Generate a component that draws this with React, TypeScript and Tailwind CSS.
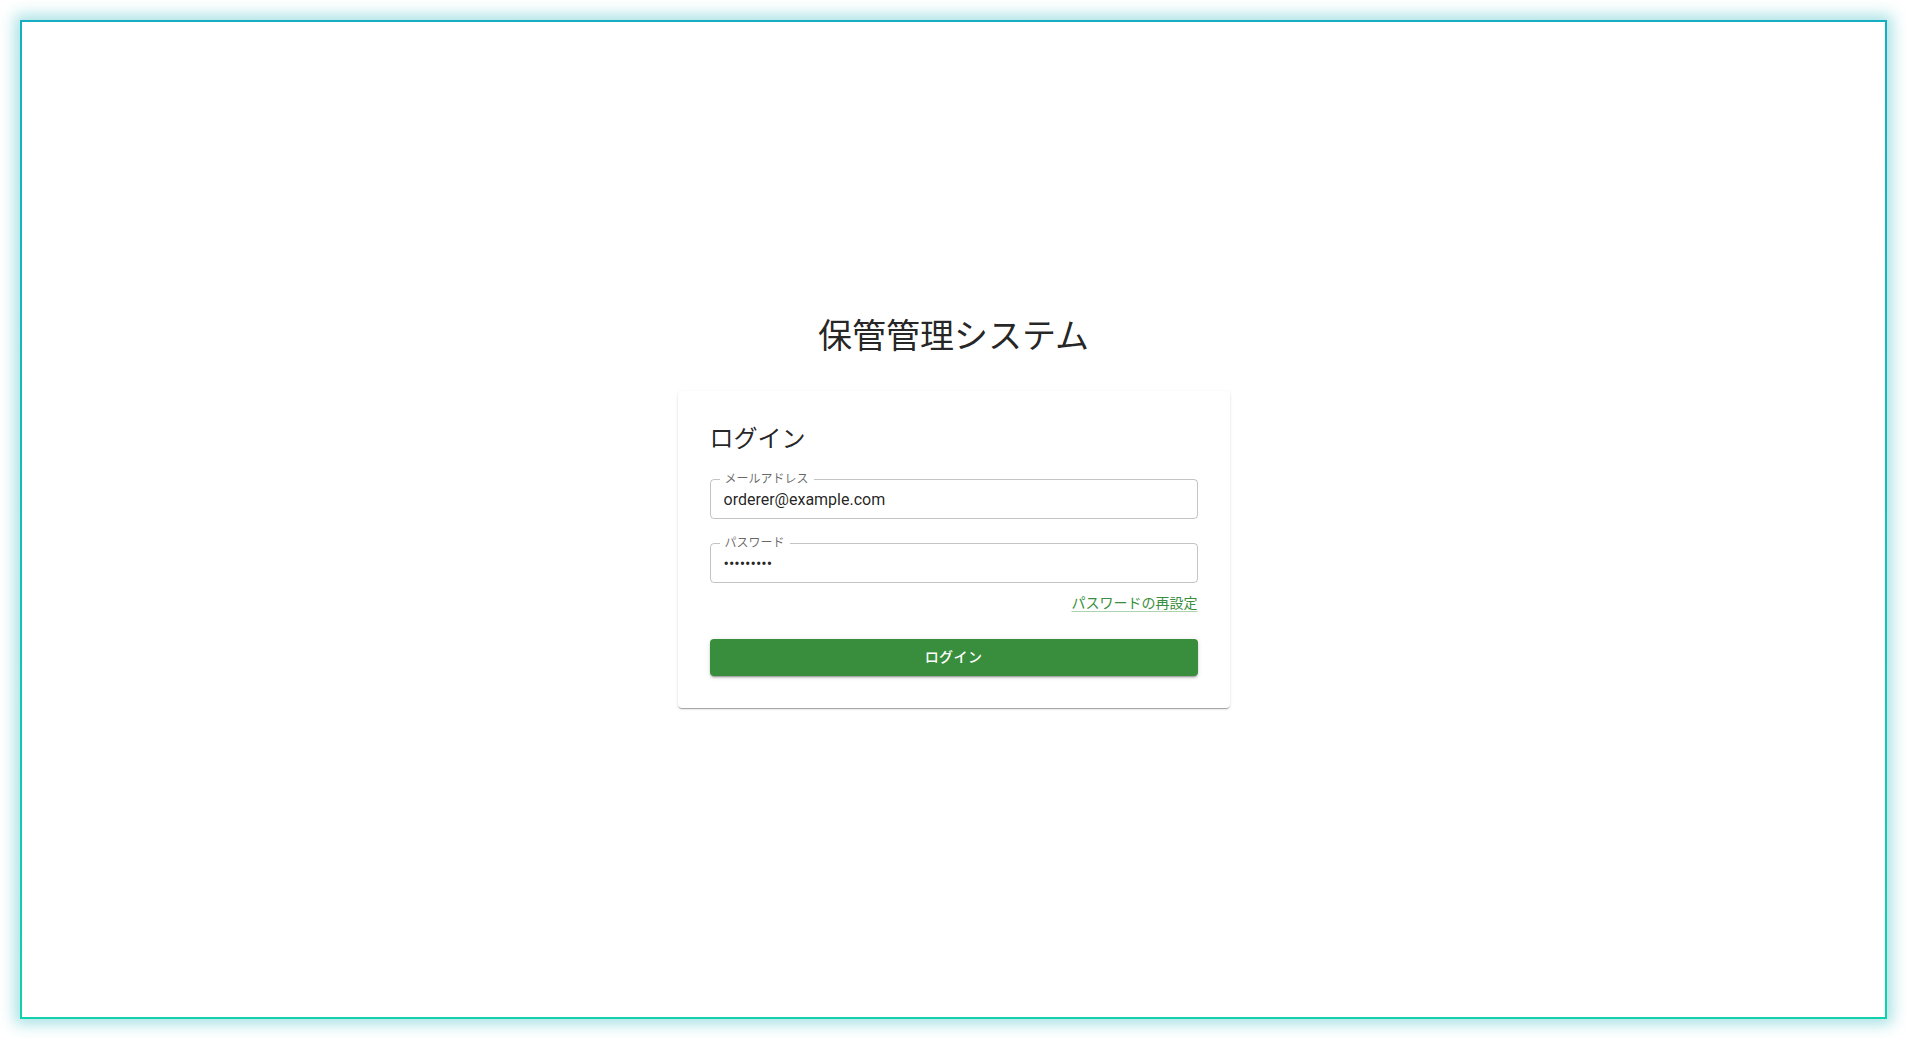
import { useState } from 'react'

const FONT = 'font-[Roboto,"Noto_Sans_CJK_JP",sans-serif]'

interface OutlinedFieldProps {
  label: string
  type: string
  value: string
  onChange: (v: string) => void
  className?: string
}

// MUI-like small outlined text field
function OutlinedField({ label, type, value, onChange, className }: OutlinedFieldProps) {
  return (
    <div className={`relative h-[40px] rounded border border-[rgba(0,0,0,0.23)] ${className ?? ''}`}>
      <span className="absolute left-[9px] top-[-7px] bg-white px-[5px] text-[12px] leading-[12px] text-[rgba(0,0,0,0.6)]">
        {label}
      </span>
      <input
        type={type}
        value={value}
        onChange={(e) => onChange(e.target.value)}
        className="h-full w-full bg-transparent px-[13px] text-[16px] leading-[23px] text-[rgba(0,0,0,0.87)] outline-none"
      />
    </div>
  )
}

export default function App() {
  const [email, setEmail] = useState('orderer@example.com')
  const [password, setPassword] = useState('password1')

  return (
    <div className={`h-screen bg-white p-[20px] ${FONT}`}>
      {/* Window frame */}
      <div className="h-full bg-gradient-to-b from-[#17adc2] to-[#11d0ae] p-[2px] shadow-[0_0_14px_5px_rgba(23,175,185,0.38)]">
        <div className="flex h-full flex-col items-center justify-center bg-white pb-4">
          <h1 className="mb-[34px] text-[34px] font-normal leading-[42px] text-[rgba(0,0,0,0.87)]">
            保管管理システム
          </h1>

          <div className="w-[552px] rounded bg-white p-8 shadow-[0_2px_1px_-1px_rgba(0,0,0,0.2),0_1px_1px_0_rgba(0,0,0,0.14),0_1px_3px_0_rgba(0,0,0,0.12)]">
            <h2 className="text-[24px] font-normal leading-[32px] text-[rgba(0,0,0,0.87)]">ログイン</h2>

            <OutlinedField label="メールアドレス" type="email" value={email} onChange={setEmail} className="mt-6" />
            <OutlinedField label="パスワード" type="password" value={password} onChange={setPassword} className="mt-6" />

            <div className="mt-2 h-5 text-right">
              <a
                href="#"
                className="text-[14px] leading-5 text-[#388e3c] underline decoration-[rgba(56,142,60,0.4)] underline-offset-[3px]"
              >
                パスワードの再設定
              </a>
            </div>

            <button
              type="button"
              className="mt-[28px] h-[37px] w-full rounded bg-[#388e3c] text-[14px] font-medium tracking-[0.4px] text-white shadow-[0_3px_1px_-2px_rgba(0,0,0,0.2),0_2px_2px_0_rgba(0,0,0,0.14),0_1px_5px_0_rgba(0,0,0,0.12)] hover:bg-[#2e7d32]"
            >
              ログイン
            </button>
          </div>
        </div>
      </div>
    </div>
  )
}
